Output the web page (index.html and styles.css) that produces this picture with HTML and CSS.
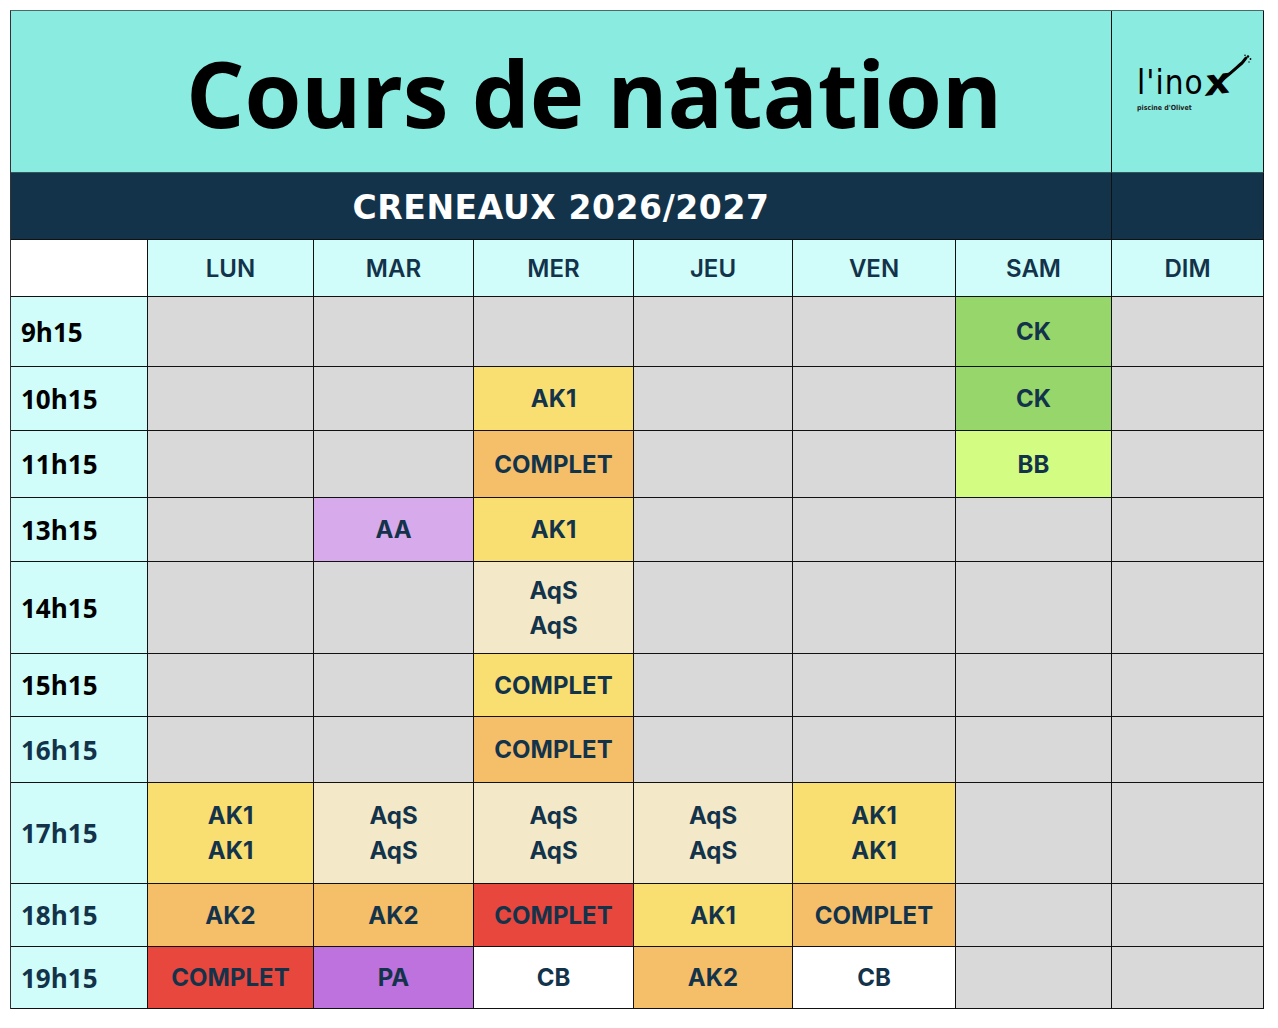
FILE: index.html
```html
<!DOCTYPE html>
<html lang="fr">
<head>
<meta charset="utf-8">
<title>Cours de natation</title>
<link rel="stylesheet" href="styles.css">
</head>
<body>
<div class="sheet">
  <div class="title">Cours de natation</div>
  <div class="logo">
    <div class="logo-mark"><span class="l-main">l'ino</span><span class="l-x">x</span>
      <svg class="swoosh" width="40" height="34" viewBox="0 0 40 34"><path d="M4 30 C14 24 22 16 30 9 C32 7 33 5 34 4" stroke="#000" stroke-width="3" fill="none" stroke-linecap="round"/><circle cx="36" cy="2.5" r="1.2"/><circle cx="38.5" cy="5" r="0.9"/><circle cx="33" cy="1.2" r="0.8"/><circle cx="37" cy="8" r="0.7"/></svg>
    </div>
    <div class="logo-sub">piscine d'Olivet</div>
  </div>
  <div class="band">CRENEAUX 2026/2027</div>
  <div class="band band-end"></div>

  <div class="corner"></div>
  <div class="day">LUN</div>
  <div class="day">MAR</div>
  <div class="day">MER</div>
  <div class="day">JEU</div>
  <div class="day">VEN</div>
  <div class="day">SAM</div>
  <div class="day">DIM</div>

  <div class="time">9h15</div>
  <div class="c gray"></div><div class="c gray"></div><div class="c gray"></div><div class="c gray"></div><div class="c gray"></div><div class="c green">CK</div><div class="c gray"></div>

  <div class="time">10h15</div>
  <div class="c gray"></div><div class="c gray"></div><div class="c yellow">AK1</div><div class="c gray"></div><div class="c gray"></div><div class="c green">CK</div><div class="c gray"></div>

  <div class="time">11h15</div>
  <div class="c gray"></div><div class="c gray"></div><div class="c orange">COMPLET</div><div class="c gray"></div><div class="c gray"></div><div class="c lime">BB</div><div class="c gray"></div>

  <div class="time">13h15</div>
  <div class="c gray"></div><div class="c lavender">AA</div><div class="c yellow">AK1</div><div class="c gray"></div><div class="c gray"></div><div class="c gray"></div><div class="c gray"></div>

  <div class="time">14h15</div>
  <div class="c gray"></div><div class="c gray"></div><div class="c beige">AqS<br>AqS</div><div class="c gray"></div><div class="c gray"></div><div class="c gray"></div><div class="c gray"></div>

  <div class="time">15h15</div>
  <div class="c gray"></div><div class="c gray"></div><div class="c yellow">COMPLET</div><div class="c gray"></div><div class="c gray"></div><div class="c gray"></div><div class="c gray"></div>

  <div class="time navy">16h15</div>
  <div class="c gray"></div><div class="c gray"></div><div class="c orange">COMPLET</div><div class="c gray"></div><div class="c gray"></div><div class="c gray"></div><div class="c gray"></div>

  <div class="time navy">17h15</div>
  <div class="c yellow">AK1<br>AK1</div><div class="c beige">AqS<br>AqS</div><div class="c beige">AqS<br>AqS</div><div class="c beige">AqS<br>AqS</div><div class="c yellow">AK1<br>AK1</div><div class="c gray"></div><div class="c gray"></div>

  <div class="time navy">18h15</div>
  <div class="c orange">AK2</div><div class="c orange">AK2</div><div class="c red">COMPLET</div><div class="c yellow">AK1</div><div class="c orange">COMPLET</div><div class="c gray"></div><div class="c gray"></div>

  <div class="time navy">19h15</div>
  <div class="c red">COMPLET</div><div class="c purple">PA</div><div class="c white">CB</div><div class="c orange">AK2</div><div class="c white">CB</div><div class="c gray"></div><div class="c gray"></div>
</div>
</body>
</html>
```

FILE: styles.css
```css
html, body {
  margin: 0;
  padding: 0;
  background: #ffffff;
}
body {
  padding: 10px 0 0 10px;
}
.sheet {
  display: grid;
  grid-template-columns: 137px 166px 160px 160px 159px 163px 156px 152px;
  grid-template-rows: 162px 67px 57px 70px 64px 67px 64px 92px 63px 66px 101px 63px 62px;
  width: 1254px;
  border-left: 1px solid #333;
  border-top: 1px solid #4a6a6a;
  box-sizing: border-box;
  font-family: Inter, "Noto Sans", sans-serif;
  color: #13334b;
}
.sheet > div {
  box-sizing: border-box;
  border-right: 1px solid #111;
  border-bottom: 1px solid #111;
  display: flex;
  align-items: center;
  justify-content: center;
  text-align: center;
}
.title {
  grid-column: 1 / span 7;
  background: #8aebe0;
  font-family: "Open Sans", sans-serif;
  font-weight: 700;
  font-size: 92px;
  color: #000;
  letter-spacing: -0.3px;
  padding-left: 66px;
  padding-top: 2px;
  border-bottom-color: #2f5a5a !important;
}
.logo {
  background: #8aebe0;
  flex-direction: column;
  align-items: flex-start !important;
  justify-content: center;
  padding-left: 25px;
  padding-bottom: 8px;
  border-bottom-color: #2f5a5a !important;
}
.logo-mark {
  position: relative;
  font-family: "DejaVu Sans Condensed", "DejaVu Sans", sans-serif;
  color: #000;
  line-height: 1;
  display: flex;
  align-items: flex-end;
}
.l-main {
  font-size: 33px;
  letter-spacing: 1px;
  display: inline-block;
}
.l-x {
  font-size: 36px;
  font-weight: bold;
  font-style: italic;
  display: inline-block;
  transform: rotate(-8deg) scaleX(1.25);
  margin-left: 3px;
  margin-bottom: -1px;
}
.swoosh {
  position: absolute;
  right: -24px;
  top: -10px;
  fill: #000;
}
.logo-sub {
  font-family: "DejaVu Sans Condensed", sans-serif;
  font-size: 7px;
  font-weight: bold;
  color: #222;
  margin-top: 5px;
}
.band {
  grid-column: 1 / span 7;
  background: #13334a;
  color: #fff;
  font-family: "DejaVu Sans", sans-serif;
  font-weight: bold;
  font-size: 33px;
  letter-spacing: 0.6px;
  padding-top: 2px;
}
.band-end {
  grid-column: 8 / span 1;
}
.corner {
  background: #ffffff;
}
.day {
  background: #d0fdf9;
  font-size: 24px;
  font-weight: 600;
}
.time {
  background: #d0fdf9;
  justify-content: flex-start !important;
  padding-left: 10px;
  font-family: "Open Sans", sans-serif;
  font-weight: 700;
  font-size: 26px;
  color: #000;
}
.time.navy {
  color: #13334b;
}
.c {
  font-size: 24px;
  font-weight: 700;
  line-height: 35px;
}
.gray { background: #d9d9d9; }
.green { background: #97d66b; }
.lime { background: #d2fd82; }
.yellow { background: #f9de72; }
.orange { background: #f5bf6a; }
.red { background: #e8473d; }
.beige { background: #f3e9c9; }
.lavender { background: #d7aaec; }
.purple { background: #bd72dd; }
.white { background: #ffffff; }
```
